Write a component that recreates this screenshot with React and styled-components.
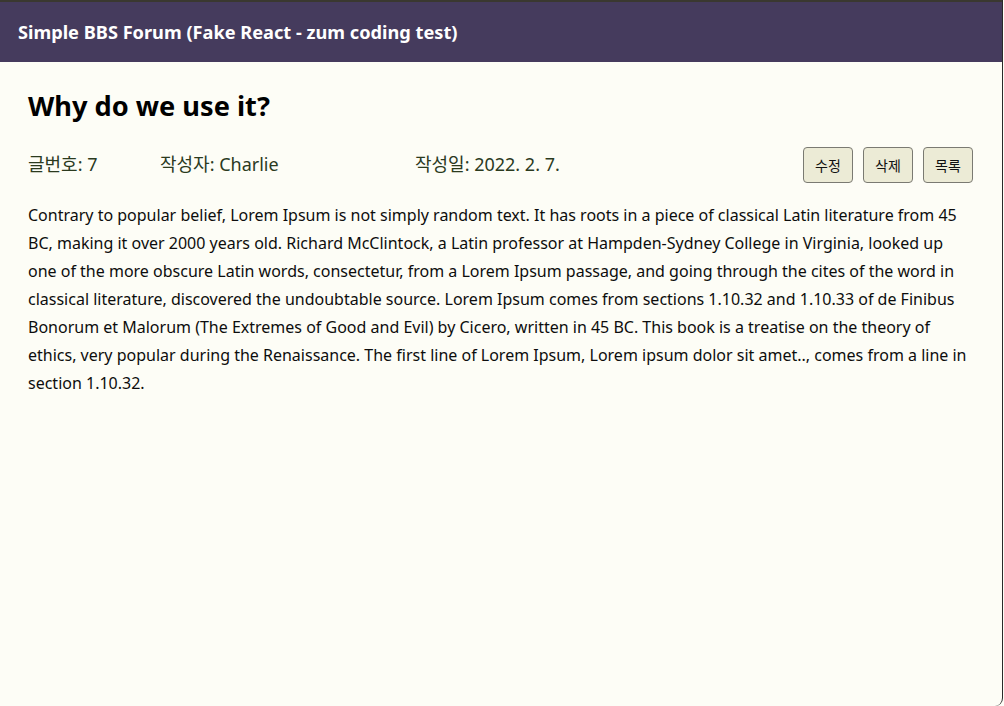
import React from "react";
import styled, { createGlobalStyle } from "styled-components";

const GlobalStyle = createGlobalStyle`
  html, body { margin: 0; padding: 0; }
  body {
    background: #fdfdf6;
    font-family: "Noto Sans", "Noto Sans CJK KR", sans-serif;
    overflow: hidden;
  }
`;

const Frame = styled.div`
  width: 1003px;
  height: 706px;
  box-sizing: border-box;
  border-right: 1px solid #2a2a2a;
  border-bottom-right-radius: 8px;
  background: #fdfdf6;
  display: flex;
  flex-direction: column;
  overflow: hidden;
`;

const Header = styled.header`
  height: 62px;
  flex: none;
  background: #453b5d;
  border-top: 2px solid #3a3830;
  box-sizing: border-box;
  display: flex;
  align-items: center;
  padding: 0 18px;
`;

const HeaderTitle = styled.h1`
  margin: 0;
  color: #ffffff;
  font-size: 18.2px;
  font-weight: 700;
`;

const Main = styled.main`
  padding: 26px 29px 0 28px;
  display: flex;
  flex-direction: column;
`;

const Title = styled.h2`
  margin: 0;
  font-size: 27.2px;
  line-height: 36px;
  font-weight: 700;
  color: #000;
`;

const MetaRow = styled.div`
  display: flex;
  align-items: center;
  margin-top: 21px;
  height: 36px;
`;

const MetaItem = styled.span`
  width: ${(p) => p.$w || "auto"};
  flex: none;
  font-size: 18px;
  color: #2b3a1e;
`;

const Buttons = styled.div`
  margin-left: auto;
  margin-top: 4px;
  display: flex;
  gap: 10px;
`;

const Button = styled.button`
  width: 50px;
  height: 36px;
  box-sizing: border-box;
  border: 1px solid #7a7a72;
  border-radius: 4px;
  background: #ecebd6;
  font-family: "Noto Sans CJK KR", sans-serif;
  font-size: 14px;
  color: #111;
  padding: 0;
  cursor: pointer;
`;

const Body = styled.p`
  margin: 20px 0 0;
  font-size: 16px;
  line-height: 28px;
  color: #0d0d0d;
`;

const text =
  "Contrary to popular belief, Lorem Ipsum is not simply random text. It has roots in a piece of classical Latin literature from 45 BC, making it over 2000 years old. Richard McClintock, a Latin professor at Hampden-Sydney College in Virginia, looked up one of the more obscure Latin words, consectetur, from a Lorem Ipsum passage, and going through the cites of the word in classical literature, discovered the undoubtable source. Lorem Ipsum comes from sections 1.10.32 and 1.10.33 of de Finibus Bonorum et Malorum (The Extremes of Good and Evil) by Cicero, written in 45 BC. This book is a treatise on the theory of ethics, very popular during the Renaissance. The first line of Lorem Ipsum, Lorem ipsum dolor sit amet.., comes from a line in section 1.10.32.";

export default function App() {
  return (
    <>
      <GlobalStyle />
      <Frame>
        <Header>
          <HeaderTitle>Simple BBS Forum (Fake React - zum coding test)</HeaderTitle>
        </Header>
        <Main>
          <Title>Why do we use it?</Title>
          <MetaRow>
            <MetaItem $w="132px">글번호: 7</MetaItem>
            <MetaItem $w="255px">작성자: Charlie</MetaItem>
            <MetaItem>작성일: 2022. 2. 7.</MetaItem>
            <Buttons>
              <Button>수정</Button>
              <Button>삭제</Button>
              <Button>목록</Button>
            </Buttons>
          </MetaRow>
          <Body>{text}</Body>
        </Main>
      </Frame>
    </>
  );
}
